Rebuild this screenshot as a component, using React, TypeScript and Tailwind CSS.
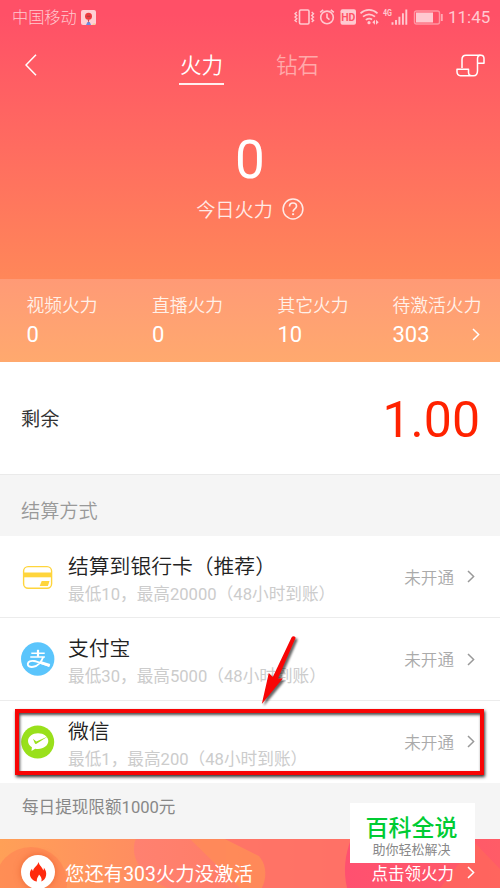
import React from "react"

const FONT = "font-['Roboto','Noto_Sans_CJK_SC',sans-serif]"

const stats = [
  { label: "视频火力", value: "0", width: "w-[125.5px]" },
  { label: "直播火力", value: "0", width: "w-[125.5px]" },
  { label: "其它火力", value: "10", width: "w-[115px]" },
  { label: "待激活火力", value: "303", width: "w-[90px]", arrow: true },
]

const methods = [
  {
    title: "结算到银行卡（推荐）",
    note: "最低10，最高20000（48小时到账）",
    icon: <BankCardIcon />,
  },
  {
    title: "支付宝",
    note: "最低30，最高5000（48小时到账）",
    icon: <AlipayIcon />,
  },
  {
    title: "微信",
    note: "最低1，最高200（48小时到账）",
    icon: <WechatIcon />,
  },
]

function Chevron({ className = "" }: { className?: string }) {
  return (
    <svg
      viewBox="0 0 8 13"
      className={`h-[13px] w-2 shrink-0 ${className}`}
      fill="none"
      stroke="currentColor"
      strokeWidth="1.5"
    >
      <path d="M1 1l5.6 5.5L1 12" />
    </svg>
  )
}

function BankCardIcon() {
  return (
    <svg viewBox="0 0 34 34" className="size-[34px]">
      <rect x="2.6" y="6.6" width="28" height="21.6" rx="4.5" fill="none" stroke="#ffd53c" strokeWidth="1.4" />
      <path d="M3 12.5h27.5v4.8H3z" fill="#ffd53c" />
      <path d="M20.7 21h7.8l-1.6 5h-8.2z" fill="#ffd53c" />
    </svg>
  )
}

function AlipayIcon() {
  return (
    <svg viewBox="0 0 34 34" className="size-[34px]">
      <circle cx="16.7" cy="17" r="16.7" fill="#5bc5fc" />
      <g fill="none" stroke="#fff">
        <path d="M10.3 11.3h13.4M9.3 15h14.6" strokeWidth="1.5" />
        <path d="M17 7.8v7" strokeWidth="2.2" />
        <path
          d="M22.2 15c-1.5 4.2-4.8 8.9-9.9 9.8-3.500.6-5.7-.8-5.5-3 .3-2.1 2.7-3.4 6.2-2.8 3.4.6 5.5 1.6 15.300 5"
          strokeWidth="1.9"
        />
        <path d="M20 20.6l8.8 2.7" strokeWidth="2.8" />
      </g>
    </svg>
  )
}

function WechatIcon() {
  return (
    <svg viewBox="0 0 34 34" className="size-[34px]">
      <circle cx="16.7" cy="17" r="16.5" fill="#99e01b" />
      <path
        d="M17 8.3c5.8 0 10.3 3.5 10.3 7.8S22.8 24 17 24c-1 0-1.9-.1-2.8-.3L10.5 26l.4-3.8C8.5 20.8 7 18.6 7 16.1c0-4.3 4.4-7.8 10-7.8z"
        fill="#fff"
      />
      <path d="M12 13.8l3.300 2.600L26.800 11.600 15.500 18.800c-.8.5-1.300.300-1.700-.500z" fill="#99e01b" />
    </svg>
  )
}

function StatusIcons() {
  return (
    <svg viewBox="0 0 150 20" className="h-5 w-[150px]" fill="none" stroke="#ffc9d0" strokeWidth="1.6">
      {/* vibrate */}
      <rect x="5.5" y="3" width="9.500" height="14" rx="1.2" />
      <path
        d="M2.800 5L1 6.700l1.800 1.700L1 10.100l1.800 1.700L1 13.500l1.800 1.500M17.700 5l1.800 1.700-1.800 1.700 1.800 1.700-1.800 1.700 1.800 1.700-1.800 1.500"
        strokeWidth="1.4"
      />
      {/* alarm */}
      <circle cx="33" cy="10.400" r="6.300" />
      <path d="M33 6.500v4.200l2.500 2M26.200 5.400l3-2.600M39.800 5.400l-3-2.600" />
      {/* HD */}
      <rect x="46.500" y="2.200" width="15.500" height="15.500" rx="2" fill="#ffc9d0" stroke="none" />
      <text
        x="54.250"
        y="13.800"
        textAnchor="middle"
        fontSize="10.5"
        fontWeight="700"
        fill="#ff5366"
        stroke="none"
        fontFamily="Roboto, sans-serif"
      >
        HD
      </text>
      {/* wifi */}
      <path d="M66.500 6.300c5-4.500 12-4.500 17 0M69 9.700c3.700-3 8.300-3 12 0M71.800 12.900c2.200-1.600 4.500-1.600 6.300-.4" strokeWidth="1.7" />
      <circle cx="75" cy="15.700" r="1.600" fill="#ffc9d0" stroke="none" />
      <path d="M81 12.800v5l-2.700-2.500zM82 12.800v5l2.700-2.500z" fill="#ffc9d0" stroke="none" />
      {/* signal */}
      <text
        x="89"
        y="8.800"
        fontSize="9.5"
        fontWeight="700"
        fill="#ffc9d0"
        stroke="none"
        textLength="9"
        lengthAdjust="spacingAndGlyphs"
        fontFamily="Roboto, sans-serif"
      >
        4G
      </text>
      <path d="M98.500 15.200v2.500M102 13v4.700M105.400 9.700v8M108.900 6.200v11.500M112.300 2.500v15.200" strokeWidth="1.9" />
      {/* battery */}
      <rect x="120.500" y="4" width="25" height="13" rx="2" stroke="#ff96a2" strokeWidth="1.4" />
      <rect x="122" y="5.500" width="17" height="10" fill="#ffc9d0" stroke="none" />
      <path d="M147.800 7v7" stroke="#ffa9b3" strokeWidth="1.9" />
    </svg>
  )
}

function CarrierBadge() {
  return (
    <svg viewBox="0 0 15 15" className="size-[15px]">
      <rect width="15" height="15" rx="2" fill="#ffd0d5" />
      <path d="M5 15l1.5-3h2.300l1.200 3z" fill="#6a8be0" />
      <path d="M11 15l2-2 1.500 1-.5 1z" fill="#f2d49a" />
      <path d="M7.500 13L6.600 9.400h1.800z" fill="#c23f49" />
      <circle cx="7.500" cy="6.300" r="3.500" fill="#ee3b3f" />
      <path d="M5.800 6.300h3.400" stroke="#a8404a" strokeWidth="1.200" />
    </svg>
  )
}

function Header() {
  return (
    <header className="h-[279px] bg-linear-to-b/srgb from-[#ff5067] from-5% to-[#ff8759] text-white">
      <div className="flex h-[34px] items-center pr-[10px] pl-3 text-[#ffc9d0]">
        <span className="pt-[2px] text-[16.2px] leading-5 font-light">中国移动</span>
        <div className="ml-1">
          <CarrierBadge />
        </div>
        <div className="ml-auto flex items-center">
          <StatusIcons />
          <span className="ml-1 w-[42px] text-[17px] leading-5 whitespace-nowrap">11:45</span>
        </div>
      </div>

      <nav className="flex h-[62px] items-center pr-[15px] pl-[25px]">
        <svg viewBox="0 0 12 22" className="h-[22px] w-3" fill="none" stroke="#fff" strokeWidth="1.5">
          <path d="M11 .8L1 11l10 10.2" />
        </svg>
        <div className="ml-[142px] flex h-[39px] w-[45px] flex-col items-center border-b-2 border-white/90 text-[21.6px] leading-[39px] font-[350]">
          火力
        </div>
        <div className="ml-[52px] h-[39px] text-[21.6px] leading-[39px] font-[350] text-[#ffa9aa]">钻石</div>
        <svg
          viewBox="0 0 29 23"
          className="ml-auto h-[23px] w-[29px]"
          fill="none"
          stroke="#fff"
          strokeWidth="1.5"
          strokeLinejoin="round"
        >
          <path d="M6 14V5.500C6 3 7.500 1.200 10 1.200h15c2 0 3 1.500 3 3.500v4.600h-6.500" />
          <path d="M24.500 1.200c-2 0-3 1.500-3 3.500v12c0 3-1.500 5-4 5H4.500c-2.300 0-3.500-1.700-3.500-4v-2.500h11.500v3c0 2 1.200 3.500 3.200 3.500" />
        </svg>
      </nav>

      <div className="flex flex-col items-center">
        <div className="mt-[33px] text-[53px] leading-[62px]">0</div>
        <div className="mt-[6px] flex h-6 items-center">
          <span className="pt-[3px] text-[19.2px] leading-6 font-[350] text-[#ffeae6]">今日火力</span>
          <svg
            viewBox="0 0 22 22"
            className="ml-[9px] size-[22px]"
            fill="none"
            stroke="#ffeae6"
            strokeWidth="1.5"
          >
            <circle cx="11" cy="11" r="9.9" />
            <path
              d="M7.500 8.500C7.500 6.200 9 5 11 5s3.500 1.200 3.500 3.200c0 1.500-.9 2.200-1.900 3-.9.700-1.500 1.300-1.500 2.600"
              strokeWidth="1.7"
            />
            <path d="M10.100 15.300h2v1.800h-2z" fill="#ffeae6" stroke="none" />
          </svg>
        </div>
      </div>
    </header>
  )
}

function StatsBar() {
  return (
    <section className="flex h-[83px] bg-linear-to-b from-[#ff9a76] to-[#ffa96e] pt-[15px] pl-[26.5px] text-[#fff1e9]">
      {stats.map((item) => (
        <div key={item.label} className={`shrink-0 ${item.width}`}>
          <div className="text-[17.8px] leading-6 font-[350] whitespace-nowrap">{item.label}</div>
          <div className="mt-[4px] flex items-center justify-between text-[22px] leading-[26px] text-white">
            {item.value}
            {item.arrow && <Chevron className="mr-[3px] -mt-[2px]" />}
          </div>
        </div>
      ))}
    </section>
  )
}

function Balance() {
  return (
    <section className="flex h-[112px] items-center justify-between bg-white pr-[20px] pl-[21px]">
      <span className="pt-1 text-[19.2px] leading-6 text-[#333]">剩余</span>
      <span className="pt-[3px] text-[50px] leading-[60px] text-[#ff2200]">1.00</span>
    </section>
  )
}

function MethodList() {
  return (
    <section className="relative">
      <div className="flex h-[62px] items-center border-t border-[#eaeaea] pt-3 pl-[21px] text-[19.2px] leading-6 font-[350] text-[#999]">
        结算方式
      </div>
      <div className="divide-y divide-[#ececec] bg-white">
        {methods.map((item) => (
          <div key={item.title} className="flex h-[82.4px] items-center pr-[25px] pl-[21px]">
            {item.icon}
            <div className="ml-[13px] pt-[7px]">
              <div className="text-[20.8px] leading-[26px] font-[350] text-[#222]">{item.title}</div>
              <div className="mt-[3px] text-[16.65px] leading-6 text-[#ccc]">{item.note}</div>
            </div>
            <span className="ml-auto pt-[4px] text-[16.6px] leading-6 font-[350] text-[#aaa]">未开通</span>
            <Chevron className="ml-[13px] text-[#999]" />
          </div>
        ))}
      </div>

      {/* highlighted row and pointer */}
      <div className="absolute top-[235px] left-[15px] h-[66px] w-[469px] border-4 border-[#f80505] shadow-[1px_2px_3px_rgba(0,0,0,0.8),inset_1px_2px_3px_rgba(0,0,0,0.7)]" />
      <svg
        viewBox="0 0 50 80"
        className="absolute top-[158px] left-[255px] h-20 w-[50px] drop-shadow-[2px_2px_1px_rgba(0,0,0,0.6)]"
      >
        <path d="M36.500 5.500q2-2.500 4.200.300L23 46.500l4.800 0L6.800 72 13.800 41l4 4z" fill="#f80505" />
      </svg>
    </section>
  )
}

function Banner() {
  return (
    <section className="relative h-[49px] overflow-hidden bg-linear-to-r from-[#ffa057] via-[#ff7d66] to-[#ff5268] text-white">
      <svg viewBox="0 0 500 49" className="absolute inset-0 h-full w-full">
        <defs>
          <linearGradient id="rose" x1="0" x2="1">
            <stop offset="0" stopColor="#ff8170" />
            <stop offset="1" stopColor="#ff7d68" />
          </linearGradient>
          <linearGradient id="pink" x1="0" x2="1">
            <stop offset="0" stopColor="#ff5070" />
            <stop offset="1" stopColor="#ff5c67" />
          </linearGradient>
        </defs>
        <circle cx="31" cy="44" r="36" fill="#ff8454" opacity=".65" />
        <path d="M136 0h90v49h-58c-20-7-34-24-34-38 0-4 0-8 2-11z" fill="url(#rose)" />
        <path d="M190 0h35l34 17c8 9 8 22 3 32h-22z" fill="#ff8e56" opacity=".75" />
        <path d="M225 0h125v49h-88c5-10 5-23-3-32z" fill="#ff7266" opacity=".8" />
        <path d="M351 0h149v49H347c-4-18-2-33 4-49z" fill="url(#pink)" />
        <path d="M475 4l25 26v19h-60z" fill="#ff6a59" opacity=".6" />
      </svg>
      <div className="relative flex items-center pt-4 pr-[25px] pl-[21px]">
        <div className="flex size-[34px] shrink-0 items-center justify-center rounded-full bg-white shadow-[0_0_7px_rgba(220,70,20,0.5)]">
          <svg viewBox="0 0 18 22" className="h-[21px] w-[18px]">
            <path
              d="M9.500 0c1 4 4 5 5 9 .7-1 .8-2 .6-3.200C17 8.500 18 11 17.500 14c-.5 3.500-2.500 5.500-5 6.500 1-3-.5-5.500-2.500-7.500-.2 2-2.500 3-2.200 7.500C4 19.500.5 17 .5 12.500c0-2.500 1-4 2.200-5.300.2 1 .4 1.600 1.200 2.300C4 5.500 8.500 4.500 9.500 0z"
              fill="#ff2a0d"
            />
          </svg>
        </div>
        <span className="ml-[10px] pt-[5px] text-[19.4px] leading-6">您还有303火力没激活</span>
        <span className="ml-auto pt-[5px] text-[16.5px] leading-6">点击领火力</span>
        <Chevron className="ml-[13px]" />
      </div>
    </section>
  )
}

export default function App() {
  return (
    <div className={`relative h-[888px] w-[500px] overflow-hidden bg-[#f5f5f5] ${FONT}`}>
      <Header />
      <StatsBar />
      <Balance />
      <MethodList />
      <div className="flex h-[56px] items-center pb-[7px] pl-[22px] text-[16.6px] leading-6 text-[#888]">
        每日提现限额1000元
      </div>
      <Banner />

      <div className="absolute top-[803px] left-[350px] flex h-[60px] w-[125px] flex-col items-center bg-white pt-3 pr-[2px]">
        <div className="text-[23px] leading-7 font-medium text-[#00cc33]">百科全说</div>
        <div className="text-[13px] leading-[14px] text-[#888]">助你轻松解决</div>
      </div>
    </div>
  )
}
